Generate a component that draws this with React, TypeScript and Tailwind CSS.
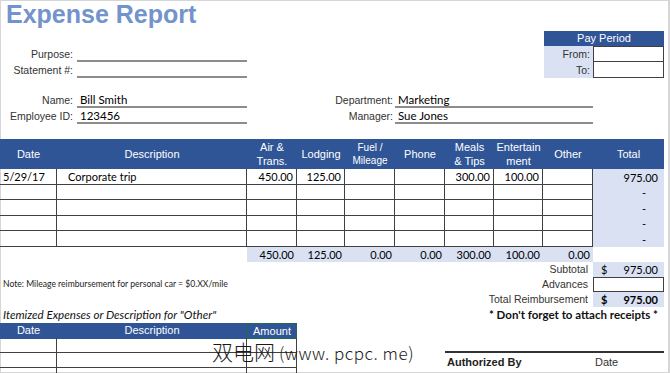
import React from "react";

const A = "font-['Liberation_Sans',Arial,sans-serif]";
const C = "font-['Lato','Open_Sans',sans-serif]";
const BLUE = "bg-[#2f5597]";
const LIGHT = "bg-[#d9e1f2]";

function LeftField({ label, value }: { label: string; value?: string }) {
  return (
    <div className="flex h-[16px]">
      <div className={`${A} w-[73px] text-right text-[10.5px] leading-[16px] text-[#333]`}>{label}</div>
      <div className={`${C} ml-[4px] w-[170px] border-b-2 border-[#8c8c8c] pl-[3px] text-[11.5px] leading-[15px] text-[#000]`}>
        {value}
      </div>
    </div>
  );
}

function RightField({ label, value }: { label: string; value?: string }) {
  return (
    <div className="flex h-[16px]">
      <div className={`${A} w-[93px] text-right text-[10.5px] leading-[16px] text-[#333]`}>{label}</div>
      <div className={`${C} ml-[2px] w-[198px] border-b-2 border-[#8c8c8c] pl-[3px] text-[11.5px] leading-[15px] text-[#000]`}>
        {value}
      </div>
    </div>
  );
}

const COLS = "grid grid-cols-[57px_190px_50px_48px_50px_50px_49px_49px_50px_71px] w-[664px]";

const rows: { h: string; vals: string[]; total: string }[] = [
  { h: "h-[16px]", vals: ["5/29/17", "Corporate trip", "450.00", "125.00", "", "", "300.00", "100.00", ""], total: "975.00" },
  { h: "h-[15px]", vals: ["", "", "", "", "", "", "", "", ""], total: "-" },
  { h: "h-[16px]", vals: ["", "", "", "", "", "", "", "", ""], total: "-" },
  { h: "h-[15px]", vals: ["", "", "", "", "", "", "", "", ""], total: "-" },
  { h: "h-[16px]", vals: ["", "", "", "", "", "", "", "", ""], total: "-" },
];

function HeaderCell({ lines, small }: { lines: string[]; small?: boolean }) {
  return (
    <div className={`flex flex-col items-center justify-center text-center text-white ${A} ${small ? "text-[10px] leading-[13px]" : "text-[11px] leading-[14px]"}`}>
      {lines.map((l, i) => (
        <span key={i}>{l}</span>
      ))}
    </div>
  );
}

export default function App() {
  return (
    <div className="relative isolate h-[373px] w-[670px] overflow-hidden bg-white">
      <div className="absolute inset-0 -z-10 border-t border-l border-r-2 border-b border-[#d6d6d6]" />

      {/* Title */}
      <div className={`${A} h-[28px] pl-[6px] text-[25px] font-bold leading-[28px] text-[#7393cc]`}>Expense Report</div>

      {/* Group 1 */}
      <div className="mt-[3px] flex h-[47px]">
        <div className="mt-[15px] flex flex-col">
          <LeftField label="Purpose:" />
          <LeftField label="Statement #:" />
        </div>
        <div className="ml-auto mr-[6px] flex w-[120px] flex-col">
          <div className={`${BLUE} ${A} h-[15px] text-center text-[11px] leading-[15px] text-white`}>Pay Period</div>
          <div className="flex h-[16px]">
            <div className={`${LIGHT} ${A} w-[49px] pr-[3px] text-right text-[10.5px] leading-[16px] text-[#333]`}>From:</div>
            <div className="w-[71px] border border-[#404040] bg-white" />
          </div>
          <div className="flex h-[16px]">
            <div className={`${LIGHT} ${A} w-[49px] pr-[3px] text-right text-[10.5px] leading-[16px] text-[#333]`}>To:</div>
            <div className="w-[71px] border-x border-b border-[#404040] bg-white" />
          </div>
        </div>
      </div>

      {/* Group 2 */}
      <div className="mt-[14px] flex h-[32px]">
        <div className="flex w-[247px] flex-col">
          <LeftField label="Name:" value="Bill Smith" />
          <LeftField label="Employee ID:" value="123456" />
        </div>
        <div className="ml-[53px] flex flex-col">
          <RightField label="Department:" value="Marketing" />
          <RightField label="Manager:" value="Sue Jones" />
        </div>
      </div>

      {/* Main table header */}
      <div className={`${COLS} ${BLUE} mt-[15px] h-[30px]`}>
        <HeaderCell lines={["Date"]} />
        <HeaderCell lines={["Description"]} />
        <HeaderCell lines={["Air &", "Trans."]} />
        <HeaderCell lines={["Lodging"]} />
        <HeaderCell lines={["Fuel /", "Mileage"]} small />
        <HeaderCell lines={["Phone"]} />
        <HeaderCell lines={["Meals", "& Tips"]} />
        <HeaderCell lines={["Entertain", "ment"]} />
        <HeaderCell lines={["Other"]} />
        <HeaderCell lines={["Total"]} />
      </div>

      {/* Data rows */}
      {rows.map((r, ri) => (
        <div key={ri} className={`${COLS} ${r.h}`}>
          {r.vals.map((v, ci) => (
            <div
              key={ci}
              className={`${C} flex items-center border-r border-b border-[#404040] text-[11px] leading-none text-[#000] ${
                ci === 0 ? "pl-[3px]" : ci === 1 ? "pl-[11px]" : "justify-end pr-[3px]"
              }`}
            >
              {v}
            </div>
          ))}
          <div className={`${LIGHT} ${C} flex items-center justify-end text-[11px] leading-none text-[#000] ${r.total === "-" ? "pr-[18px]" : "pr-[6px]"}`}>
            {r.total}
          </div>
        </div>
      ))}

      {/* Totals row */}
      <div className={`${COLS} h-[15px]`}>
        <div />
        <div />
        {["450.00", "125.00", "0.00", "0.00", "300.00", "100.00", "0.00"].map((v, i) => (
          <div key={i} className={`${LIGHT} ${C} flex items-center justify-end pr-[3px] text-[11px] leading-none text-[#000]`}>
            {v}
          </div>
        ))}
        <div />
      </div>

      {/* Summary rows */}
      <div className="flex h-[15px] w-[664px]">
        <div className="w-[300px]" />
        <div className={`${A} flex-1 pr-[5px] text-right text-[10.5px] leading-[15px] text-[#333]`}>Subtotal</div>
        <div className={`${LIGHT} ${C} flex w-[71px] items-center justify-between pl-[8px] pr-[6px] text-[11px] leading-none text-[#000]`}>
          <span>$</span>
          <span>975.00</span>
        </div>
      </div>
      <div className="flex h-[15px] w-[664px]">
        <div className={`${C} w-[300px] pl-[3px] text-[8.6px] leading-[15px] text-[#222]`}>
          Note: Mileage reimbursement for personal car = $0.XX/mile
        </div>
        <div className={`${A} flex-1 pr-[5px] text-right text-[10.5px] leading-[15px] text-[#333]`}>Advances</div>
        <div className="w-[71px] border border-[#404040] bg-white" />
      </div>
      <div className="flex h-[15px] w-[664px]">
        <div className="w-[300px]" />
        <div className={`${A} flex-1 pr-[5px] text-right text-[10.5px] leading-[15px] text-[#333]`}>Total Reimbursement</div>
        <div className={`${LIGHT} ${C} flex w-[71px] items-center justify-between pl-[8px] pr-[6px] text-[11px] font-bold leading-none text-[#000]`}>
          <span>$</span>
          <span>975.00</span>
        </div>
      </div>
      <div className="flex h-[16px] w-[664px]">
        <div className={`${C} w-[300px] pl-[3px] text-[11.6px] italic leading-[16px] text-[#111]`}>
          Itemized Expenses or Description for "Other"
        </div>
        <div className={`${C} flex-1 pr-[6px] text-right text-[11.5px] font-bold leading-[16px] text-[#111]`}>
          * Don't forget to attach receipts *
        </div>
      </div>

      {/* Itemized header */}
      <div className="grid h-[15px] w-[297px] grid-cols-[57px_190px_50px]">
        <div className={`${BLUE} ${A} text-center text-[11px] leading-[15px] text-white`}>Date</div>
        <div className={`${BLUE} ${A} text-center text-[11px] leading-[15px] text-white`}>Description</div>
        <div className={`${BLUE} ${A} border border-[#1f6b4a] text-center text-[11px] leading-[14px] text-white`}>Amount</div>
      </div>

      {/* Itemized row 1 */}
      <div className="flex h-[15px]">
        <div className="grid w-[297px] grid-cols-[57px_190px_50px]">
          <div className="border-r border-b border-[#404040]" />
          <div className="border-r border-b border-[#404040]" />
          <div className="border-r border-b border-[#404040]" />
        </div>
        <div className="ml-[148px] w-[219px] border-b-2 border-[#333]" />
      </div>
      {/* Itemized row 2 */}
      <div className="flex h-[15px]">
        <div className="grid w-[297px] grid-cols-[57px_190px_50px]">
          <div className="border-r border-b border-[#404040]" />
          <div className="border-r border-b border-[#404040]" />
          <div className="border-r border-b border-[#404040]" />
        </div>
        <div className={`${A} ml-[150px] w-[148px] text-[11px] font-bold leading-[18px] text-[#222]`}>Authorized By</div>
        <div className={`${A} text-[11px] leading-[18px] text-[#333]`}>Date</div>
      </div>
      {/* Itemized row 3 */}
      <div className="grid h-[10px] w-[297px] grid-cols-[57px_190px_50px]">
        <div className="border-r border-[#404040]" />
        <div className="border-r border-[#404040]" />
        <div className="border-r border-[#404040]" />
      </div>

      {/* Watermark overlay */}
      <div className="pointer-events-none absolute left-[212px] top-[341px] flex items-baseline whitespace-nowrap font-['Noto_Sans_CJK_SC',sans-serif] font-light leading-none text-[#1a1a1a]">
        <span className="text-[21px]">双电网</span>
        <span className="ml-[4px] text-[17px] tracking-[0.5px]">(www. pcpc. me)</span>
      </div>
    </div>
  );
}
